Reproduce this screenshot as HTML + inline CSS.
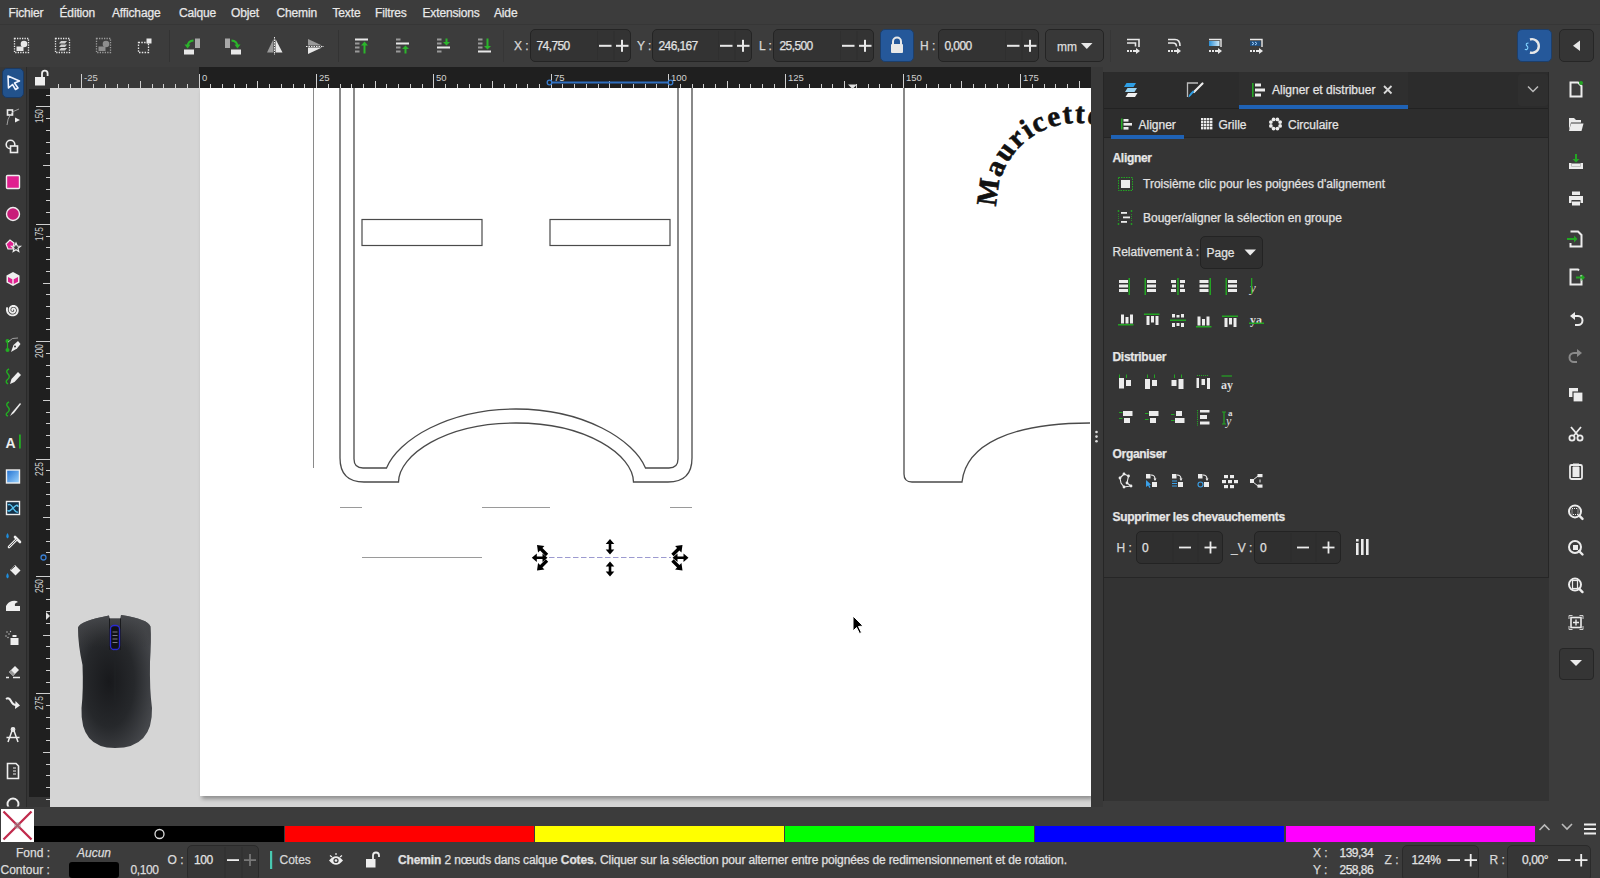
<!DOCTYPE html>
<html><head><meta charset="utf-8">
<style>
*{box-sizing:border-box}
body{margin:0;width:1600px;height:878px;background:#3c3c3c;position:relative;overflow:hidden;font-family:"Liberation Sans",sans-serif;color:#e6e6e6}
.a{position:absolute}
.t{position:absolute;font-size:12px;line-height:14px;white-space:nowrap;color:#e2e2e2;-webkit-text-stroke:0.25px currentColor}
.m{position:absolute;top:6px;font-size:12px;line-height:14px;white-space:nowrap;color:#e8e8e8;letter-spacing:-0.15px;-webkit-text-stroke:0.25px currentColor}
.en{position:absolute;background:#333;border:1px solid #242424;border-radius:5px}
svg{position:absolute;left:0;top:0}
</style></head><body>

<div class="a" style="left:0px;top:24px;width:1600px;height:1px;background:#363636;"></div>
<div class="a" style="left:0px;top:67px;width:27px;height:743px;background:#383838;"></div>
<div class="a" style="left:26px;top:67px;width:1px;height:743px;background:#2a2a2a;"></div>
<div class="a" style="left:27px;top:67px;width:23px;height:22px;background:#353535;"></div>
<div class="a" style="left:50px;top:67px;width:149px;height:21px;background:#393939;"></div>
<div class="a" style="left:199px;top:67px;width:892px;height:21px;background:#1f1f1f;"></div>
<div class="a" style="left:27px;top:89px;width:2px;height:720px;background:#353535;"></div>
<div class="a" style="left:29px;top:89px;width:21px;height:708px;background:#1f1f1f;"></div>
<div class="a" style="left:29px;top:797px;width:21px;height:12px;background:#353535;"></div>
<div class="a" style="left:50px;top:88px;width:1041px;height:719px;background:#d5d5d5;"></div>
<div class="a" style="left:200px;top:88px;width:891px;height:708px;background:#ffffff;box-shadow:2px 3px 4px rgba(0,0,0,0.33)"></div>
<div class="a" style="left:1091px;top:67px;width:12px;height:743px;background:#383838;"></div>
<div class="a" style="left:1103px;top:72px;width:446px;height:729px;background:#333333;"></div>
<div class="a" style="left:1103px;top:72px;width:1px;height:729px;background:#262626;"></div>
<div class="a" style="left:1104px;top:72px;width:445px;height:37px;background:#2c2c2c;"></div>
<div class="a" style="left:1239px;top:72px;width:169px;height:37px;background:#2f2f2f;"></div>
<div class="a" style="left:1104px;top:108px;width:445px;height:1px;background:#222;"></div>
<div class="a" style="left:1239px;top:105px;width:169px;height:4px;background:#1f62b5;"></div>
<div class="a" style="left:1104px;top:109px;width:445px;height:28px;background:#2d2d2d;"></div>
<div class="a" style="left:1104px;top:137px;width:445px;height:1px;background:#252525;"></div>
<div class="a" style="left:1104px;top:138px;width:444px;height:439px;background:#353535;"></div>
<div class="a" style="left:1111px;top:135px;width:73px;height:4px;background:#1f62b5;"></div>
<div class="a" style="left:1104px;top:577px;width:445px;height:1px;background:#262626;"></div>
<div class="a" style="left:1548px;top:72px;width:1px;height:506px;background:#262626;"></div>
<div class="a" style="left:1549px;top:67px;width:51px;height:743px;background:#3c3c3c;"></div>
<div class="a" style="left:0px;top:807px;width:1600px;height:35px;background:#3c3c3c;"></div>
<div class="a" style="left:34.0px;top:826px;width:249.6px;height:16px;background:#000000;"></div>
<div class="a" style="left:284.8px;top:826px;width:249.0px;height:16px;background:#ff0000;"></div>
<div class="a" style="left:535.0px;top:826px;width:249.0px;height:16px;background:#ffff00;"></div>
<div class="a" style="left:785.2px;top:826px;width:249.0px;height:16px;background:#00ff00;"></div>
<div class="a" style="left:1035.4px;top:826px;width:249.0px;height:16px;background:#0000ff;"></div>
<div class="a" style="left:1285.6px;top:826px;width:249.0px;height:16px;background:#ff00ff;"></div>
<div class="a" style="left:0px;top:842px;width:1600px;height:36px;background:#3c3c3c;"></div>
<div class="m" style="left:8.5px">Fichier</div>
<div class="m" style="left:59.5px">Édition</div>
<div class="m" style="left:112px">Affichage</div>
<div class="m" style="left:179px">Calque</div>
<div class="m" style="left:231px">Objet</div>
<div class="m" style="left:276.5px">Chemin</div>
<div class="m" style="left:332.5px">Texte</div>
<div class="m" style="left:375px">Filtres</div>
<div class="m" style="left:422.5px">Extensions</div>
<div class="m" style="left:494px">Aide</div>
<div class="t" style="left:514px;top:39px;color:#d8d8d8">X :</div>
<div class="en" style="left:530px;top:29px;width:101px;height:33px"></div>
<div class="t" style="left:536.5px;top:39px;letter-spacing:-0.6px">74,750</div>
<div class="t" style="left:637px;top:39px;color:#d8d8d8">Y :</div>
<div class="en" style="left:652px;top:29px;width:100px;height:33px"></div>
<div class="t" style="left:658.5px;top:39px;letter-spacing:-0.6px">246,167</div>
<div class="t" style="left:759px;top:39px;color:#d8d8d8">L :</div>
<div class="en" style="left:773px;top:29px;width:101px;height:33px"></div>
<div class="t" style="left:779.5px;top:39px;letter-spacing:-0.6px">25,500</div>
<div class="t" style="left:920px;top:39px;color:#d8d8d8">H :</div>
<div class="en" style="left:938px;top:29px;width:101px;height:33px"></div>
<div class="t" style="left:944.5px;top:39px;letter-spacing:-0.6px">0,000</div>
<div class="a" style="left:880px;top:29px;width:34px;height:33px;background:#25589a;border:1px solid #1d3f6b;border-radius:5px"></div>
<div class="en" style="left:1045px;top:29px;width:59px;height:33px;background:#383838"></div>
<div class="t" style="left:1057px;top:40px;color:#ddd">mm</div>
<div class="a" style="left:1517px;top:29px;width:35px;height:33px;background:#25589a;border:1px solid #1d3f6b;border-radius:5px"></div>
<div class="a" style="left:1559px;top:29px;width:35px;height:33px;background:#353535;border:1px solid #262626;border-radius:5px"></div>
<div class="t" style="left:1272px;top:83px;color:#e4e4e4">Aligner et distribuer</div>
<div class="t" style="left:1138.5px;top:118px;color:#e4e4e4">Aligner</div>
<div class="t" style="left:1218.5px;top:118px;color:#e4e4e4">Grille</div>
<div class="t" style="left:1288px;top:118px;color:#e4e4e4">Circulaire</div>
<div class="t" style="left:1112.5px;top:151px;font-weight:bold;color:#e6e6e6;letter-spacing:-0.3px">Aligner</div>
<div class="t" style="left:1143px;top:177px">Troisième clic pour les poignées d'alignement</div>
<div class="t" style="left:1143px;top:211px">Bouger/aligner la sélection en groupe</div>
<div class="t" style="left:1112.5px;top:245px">Relativement à :</div>
<div class="en" style="left:1200px;top:236px;width:63px;height:33px;background:#2f2f2f;border-color:#232323"></div>
<div class="t" style="left:1206.5px;top:246px">Page</div>
<div class="t" style="left:1112.5px;top:350px;font-weight:bold;color:#e6e6e6;letter-spacing:-0.3px">Distribuer</div>
<div class="t" style="left:1112.5px;top:447px;font-weight:bold;color:#e6e6e6;letter-spacing:-0.3px">Organiser</div>
<div class="t" style="left:1112.5px;top:510px;font-weight:bold;color:#e6e6e6;letter-spacing:-0.3px">Supprimer les chevauchements</div>
<div class="t" style="left:1116.5px;top:541px;color:#d8d8d8">H :</div>
<div class="en" style="left:1136px;top:531px;width:87px;height:33px;background:#2f2f2f;border-color:#232323"></div>
<div class="t" style="left:1142px;top:541px">0</div>
<div class="t" style="left:1231px;top:541px;color:#d8d8d8">_V :</div>
<div class="en" style="left:1254px;top:531px;width:87px;height:33px;background:#2f2f2f;border-color:#232323"></div>
<div class="t" style="left:1260px;top:541px">0</div>
<div class="a" style="left:1559px;top:648px;width:35px;height:32px;background:#353535;border:1px solid #262626;border-radius:4px"></div>
<div class="a" style="left:2px;top:68px;width:22px;height:30px;background:#22528c;border:1px solid #1a3a64;border-radius:5px"></div>
<div class="t" style="left:16px;top:845.5px;color:#dcdcdc">Fond :</div>
<div class="t" style="left:77px;top:845.5px;font-style:italic;color:#dcdcdc">Aucun</div>
<div class="t" style="left:0.5px;top:862.5px;color:#dcdcdc">Contour :</div>
<div class="a" style="left:69px;top:862px;width:50px;height:16px;background:#000;border-radius:3px"></div>
<div class="t" style="left:130.5px;top:862.5px;color:#dcdcdc;letter-spacing:-0.4px">0,100</div>
<div class="t" style="left:167.5px;top:853px;color:#dcdcdc">O :</div>
<div class="en" style="left:187px;top:845px;width:72px;height:36px;background:#363636;border-color:#2a2a2a"></div>
<div class="t" style="left:194px;top:853px;letter-spacing:-0.4px">100</div>
<div class="t" style="left:279.5px;top:853px;color:#d8d8d8">Cotes</div>
<div class="t" style="left:398px;top:853px;color:#e0e0e0;letter-spacing:-0.12px"><b>Chemin</b> 2 nœuds dans calque <b>Cotes</b>. Cliquer sur la sélection pour alterner entre poignées de redimensionnement et de rotation.</div>
<div class="t" style="left:1313px;top:845.5px;color:#d8d8d8">X :</div>
<div class="t" style="left:1339.5px;top:845.5px;letter-spacing:-0.5px">139,34</div>
<div class="t" style="left:1313px;top:862.5px;color:#d8d8d8">Y :</div>
<div class="t" style="left:1339.5px;top:862.5px;letter-spacing:-0.5px">258,86</div>
<div class="t" style="left:1384.5px;top:853px;color:#d8d8d8">Z :</div>
<div class="en" style="left:1402px;top:845px;width:77px;height:36px;background:#363636;border-color:#2a2a2a"></div>
<div class="t" style="left:1411.5px;top:853px;letter-spacing:-0.4px">124%</div>
<div class="t" style="left:1489.5px;top:853px;color:#d8d8d8">R :</div>
<div class="en" style="left:1507px;top:845px;width:84px;height:36px;background:#363636;border-color:#2a2a2a"></div>
<div class="t" style="left:1522px;top:853px;letter-spacing:-0.4px">0,00°</div>
<svg width="1600" height="878" viewBox="0 0 1600 878"><rect x="14.5" y="38.5" width="14" height="14" fill="none" stroke="#e8e8e8" stroke-width="1.3" stroke-dasharray="1.3 1.2"/><circle cx="24" cy="44" r="3.3" fill="#e8e8e8"/><rect x="16.5" y="46.5" width="7" height="4.5" fill="#e8e8e8"/><rect x="55.5" y="38.5" width="14" height="14" fill="none" stroke="#e8e8e8" stroke-width="1.3" stroke-dasharray="1.3 1.2"/><path d="M59 43.5 L61 41 L67 41 L65 43.5 Z" fill="#cfcfcf"/><path d="M59 47.0 L61 44.5 L67 44.5 L65 47.0 Z" fill="#cfcfcf"/><path d="M59 50.5 L61 48 L67 48 L65 50.5 Z" fill="#cfcfcf"/><rect x="96.5" y="38.5" width="14" height="14" fill="none" stroke="#9c9c9c" stroke-width="1.3" stroke-dasharray="1.3 1.2"/><circle cx="106" cy="44" r="3.3" fill="#8d8d8d"/><rect x="98.5" y="46.5" width="7" height="4.5" fill="#8d8d8d"/><rect x="138.5" y="42.5" width="10" height="10" fill="none" stroke="#e8e8e8" stroke-width="1.3" stroke-dasharray="1.5 1.3"/><rect x="146.5" y="38.5" width="5" height="5" fill="#e8e8e8"/><rect x="169" y="30" width="1" height="32" fill="#333"/><rect x="184" y="49.5" width="10" height="5" fill="#e8e8e8"/><rect x="195" y="38.5" width="5" height="9.5" fill="#a8a8a8"/><path d="M193.5 40.5 Q188 41 187.5 46" fill="none" stroke="#2bb52b" stroke-width="1.8"/><path d="M184.5 44.5 L187.6 48.5 L190.5 44.5 Z" fill="#2bb52b"/><rect x="225" y="38.5" width="5" height="9.5" fill="#a8a8a8"/><rect x="231" y="49.5" width="10" height="5" fill="#e8e8e8"/><path d="M231.5 40.5 Q237 41 237.5 46" fill="none" stroke="#2bb52b" stroke-width="1.8"/><path d="M234.5 44.5 L237.4 48.5 L240.5 44.5 Z" fill="#2bb52b"/><path d="M273.5 39 L267 52.5 L273.5 52.5 Z" fill="#9a9a9a"/><path d="M275.5 39 L282.5 52.5 L275.5 52.5 Z" fill="#e8e8e8"/><line x1="274.5" y1="37" x2="274.5" y2="55" stroke="#e8e8e8" stroke-width="1" stroke-dasharray="1.5 1"/><path d="M308 39 L322 45.5 L308 45.5 Z" fill="#9a9a9a"/><path d="M308 47.5 L322 47.5 L308 54 Z" fill="#e8e8e8"/><line x1="306" y1="46.5" x2="324" y2="46.5" stroke="#e8e8e8" stroke-width="1" stroke-dasharray="1.5 1"/><rect x="338" y="30" width="1" height="32" fill="#333"/><rect x="355" y="38.5" width="13" height="2" fill="#e8e8e8"/><rect x="355" y="42.5" width="4.5" height="2" fill="#9a9a9a"/><rect x="355" y="46.5" width="4.5" height="2" fill="#9a9a9a"/><rect x="355" y="50.5" width="4.5" height="2" fill="#9a9a9a"/><path d="M364.5 53.5 V44" stroke="#2bb52b" stroke-width="2"/><path d="M361 45.5 L364.5 41.5 L368 45.5Z" fill="#2bb52b"/><rect x="396" y="38.5" width="4.5" height="2" fill="#9a9a9a"/><rect x="396" y="42.5" width="13" height="2" fill="#e8e8e8"/><rect x="396" y="46.5" width="4.5" height="2" fill="#9a9a9a"/><rect x="396" y="50.5" width="4.5" height="2" fill="#9a9a9a"/><path d="M405.5 53.5 V48" stroke="#2bb52b" stroke-width="2"/><path d="M402 49 L405.5 45.5 L409 49Z" fill="#2bb52b"/><rect x="437" y="38.5" width="4.5" height="2" fill="#9a9a9a"/><rect x="437" y="42.5" width="4.5" height="2" fill="#9a9a9a"/><rect x="437" y="46.5" width="13" height="2" fill="#e8e8e8"/><rect x="437" y="50.5" width="4.5" height="2" fill="#9a9a9a"/><path d="M446.5 38.5 V43" stroke="#2bb52b" stroke-width="2"/><path d="M443 42 L446.5 45.5 L450 42Z" fill="#2bb52b"/><rect x="478" y="38.5" width="4.5" height="2" fill="#9a9a9a"/><rect x="478" y="42.5" width="4.5" height="2" fill="#9a9a9a"/><rect x="478" y="46.5" width="4.5" height="2" fill="#9a9a9a"/><rect x="478" y="50.5" width="13" height="2" fill="#e8e8e8"/><path d="M487.5 38.5 V47" stroke="#2bb52b" stroke-width="2"/><path d="M484 46 L487.5 49.5 L491 46Z" fill="#2bb52b"/><rect x="503" y="30" width="1" height="32" fill="#363636"/><rect x="597" y="31" width="1" height="29" fill="#2f2f2f"/><rect x="613.5" y="31" width="1" height="29" fill="#2f2f2f"/><rect x="599" y="44.8" width="12.5" height="2" fill="#e8e8e8"/><rect x="616" y="44.8" width="12.5" height="2" fill="#e8e8e8"/><rect x="621" y="39.8" width="2" height="12" fill="#e8e8e8"/><rect x="718" y="31" width="1" height="29" fill="#2f2f2f"/><rect x="734.5" y="31" width="1" height="29" fill="#2f2f2f"/><rect x="720" y="44.8" width="12.5" height="2" fill="#e8e8e8"/><rect x="737" y="44.8" width="12.5" height="2" fill="#e8e8e8"/><rect x="742" y="39.8" width="2" height="12" fill="#e8e8e8"/><rect x="840" y="31" width="1" height="29" fill="#2f2f2f"/><rect x="856.5" y="31" width="1" height="29" fill="#2f2f2f"/><rect x="842" y="44.8" width="12.5" height="2" fill="#e8e8e8"/><rect x="859" y="44.8" width="12.5" height="2" fill="#e8e8e8"/><rect x="864" y="39.8" width="2" height="12" fill="#e8e8e8"/><rect x="1005" y="31" width="1" height="29" fill="#2f2f2f"/><rect x="1021.5" y="31" width="1" height="29" fill="#2f2f2f"/><rect x="1007" y="44.8" width="12.5" height="2" fill="#e8e8e8"/><rect x="1024" y="44.8" width="12.5" height="2" fill="#e8e8e8"/><rect x="1029" y="39.8" width="2" height="12" fill="#e8e8e8"/><path d="M893 44 V41.5 A4 4 0 0 1 901 41.5 V44" fill="none" stroke="#e8e8e8" stroke-width="2"/><rect x="891" y="44" width="12" height="9" rx="1" fill="#e8e8e8"/><path d="M1081 43 L1092.5 43 L1086.8 49 Z" fill="#e8e8e8"/><rect x="1110" y="30" width="1" height="32" fill="#363636"/><path d="M1127 39.5 H1139 V47" fill="none" stroke="#e8e8e8" stroke-width="1.6"/><path d="M1127 43 H1135.5 V46.5" fill="none" stroke="#e8e8e8" stroke-width="1.6"/><rect x="1127" y="50" width="2" height="2" fill="#e8e8e8"/><rect x="1130" y="50" width="2" height="2" fill="#e8e8e8"/><rect x="1133" y="50" width="3" height="2" fill="#e8e8e8"/><path d="M1136 48 L1140 51 L1136 54 Z" fill="#e8e8e8"/><path d="M1168 39.5 H1175 Q1180 39.5 1180 46" fill="none" stroke="#e8e8e8" stroke-width="1.6"/><path d="M1168 43 H1173 Q1176.5 43 1176.5 46.5" fill="none" stroke="#e8e8e8" stroke-width="1.6"/><rect x="1168" y="50" width="2" height="2" fill="#e8e8e8"/><rect x="1171" y="50" width="2" height="2" fill="#e8e8e8"/><rect x="1174" y="50" width="3" height="2" fill="#e8e8e8"/><path d="M1177 48 L1181 51 L1177 54 Z" fill="#e8e8e8"/><defs><linearGradient id="gb" x1="0" x2="1"><stop offset="0" stop-color="#2b8fd6"/><stop offset="1" stop-color="#cfe8f7"/></linearGradient></defs><path d="M1209 39.5 H1221 V47" fill="none" stroke="#e8e8e8" stroke-width="1.4"/><rect x="1209" y="41" width="10.5" height="5" fill="url(#gb)"/><rect x="1209" y="50" width="2" height="2" fill="#e8e8e8"/><rect x="1212" y="50" width="2" height="2" fill="#e8e8e8"/><rect x="1215" y="50" width="3" height="2" fill="#e8e8e8"/><path d="M1218 48 L1222 51 L1218 54 Z" fill="#e8e8e8"/><path d="M1250 39.5 H1262 V47" fill="none" stroke="#e8e8e8" stroke-width="1.4"/><rect x="1250" y="41" width="10.5" height="5" fill="#1f4f80"/><path d="M1252 42 L1254 43.5 L1252 45 M1255 42 L1257 43.5 L1255 45" stroke="#9fd0ff" stroke-width="1" fill="none"/><rect x="1250" y="50" width="2" height="2" fill="#e8e8e8"/><rect x="1253" y="50" width="2" height="2" fill="#e8e8e8"/><rect x="1256" y="50" width="3" height="2" fill="#e8e8e8"/><path d="M1259 48 L1263 51 L1259 54 Z" fill="#e8e8e8"/><path d="M1530 39.5 A6.8 6.8 0 1 1 1530 52.5" fill="none" stroke="#e8e8e8" stroke-width="2.4"/><path d="M1528.5 43 Q1525.5 43 1526.5 45.5 Q1529 47 1527 49.5 Q1525.5 50 1525 49" fill="none" stroke="#7fd0ff" stroke-width="1.1"/><path d="M1580 40.5 V51 L1573 45.8 Z" fill="#e8e8e8"/><path d="M58.5 84V88M70.5 84V88M81.5 74V88M93.5 84V88M105.5 84V88M117.5 84V88M128.5 84V88M140.5 81V88M152.5 84V88M163.5 84V88M175.5 84V88M187.5 84V88M199.5 74V88M210.5 84V88M222.5 84V88M234.5 84V88M246.5 84V88M257.5 81V88M269.5 84V88M281.5 84V88M293.5 84V88M304.5 84V88M316.5 74V88M328.5 84V88M340.5 84V88M351.5 84V88M363.5 84V88M375.5 81V88M386.5 84V88M398.5 84V88M410.5 84V88M422.5 84V88M433.5 74V88M445.5 84V88M457.5 84V88M469.5 84V88M480.5 84V88M492.5 81V88M504.5 84V88M516.5 84V88M527.5 84V88M539.5 84V88M551.5 74V88M562.5 84V88M574.5 84V88M586.5 84V88M598.5 84V88M609.5 81V88M621.5 84V88M633.5 84V88M645.5 84V88M656.5 84V88M668.5 74V88M680.5 84V88M692.5 84V88M703.5 84V88M715.5 84V88M727.5 81V88M739.5 84V88M750.5 84V88M762.5 84V88M774.5 84V88M785.5 74V88M797.5 84V88M809.5 84V88M821.5 84V88M832.5 84V88M844.5 81V88M856.5 84V88M868.5 84V88M879.5 84V88M891.5 84V88M903.5 74V88M915.5 84V88M926.5 84V88M938.5 84V88M950.5 84V88M961.5 81V88M973.5 84V88M985.5 84V88M997.5 84V88M1008.5 84V88M1020.5 74V88M1032.5 84V88M1044.5 84V88M1055.5 84V88M1067.5 84V88M1079.5 81V88" stroke="#cfcfcf" stroke-width="1"/><text x="84.0" y="80.5" font-family="Liberation Sans" font-size="9.5" fill="#d0d0d0">-25</text><text x="202.0" y="80.5" font-family="Liberation Sans" font-size="9.5" fill="#d0d0d0">0</text><text x="319.0" y="80.5" font-family="Liberation Sans" font-size="9.5" fill="#d0d0d0">25</text><text x="436.0" y="80.5" font-family="Liberation Sans" font-size="9.5" fill="#d0d0d0">50</text><text x="554.0" y="80.5" font-family="Liberation Sans" font-size="9.5" fill="#d0d0d0">75</text><text x="671.0" y="80.5" font-family="Liberation Sans" font-size="9.5" fill="#d0d0d0">100</text><text x="788.0" y="80.5" font-family="Liberation Sans" font-size="9.5" fill="#d0d0d0">125</text><text x="906.0" y="80.5" font-family="Liberation Sans" font-size="9.5" fill="#d0d0d0">150</text><text x="1023.0" y="80.5" font-family="Liberation Sans" font-size="9.5" fill="#d0d0d0">175</text><path d="M550 82.5 H671" stroke="#2f6fc0" stroke-width="2"/><circle cx="549.5" cy="82.5" r="2.3" fill="#1f1f1f" stroke="#3a7ed0" stroke-width="1.3"/><circle cx="670.5" cy="82.5" r="2.3" fill="#1f1f1f" stroke="#3a7ed0" stroke-width="1.3"/><path d="M848 84.5 L857 84.5 L852.5 89 Z" fill="#e0e0e0"/><rect x="35" y="77" width="10" height="8.5" fill="#eee"/><path d="M42 77 V73.5 A2.8 2.8 0 0 1 47.6 73.5 V76" fill="none" stroke="#eee" stroke-width="1.8"/><path d="M46 95.5H50M36 106.5H50M46 118.5H50M46 130.5H50M46 142.5H50M46 153.5H50M43 165.5H50M46 177.5H50M46 189.5H50M46 200.5H50M46 212.5H50M36 224.5H50M46 236.5H50M46 247.5H50M46 259.5H50M46 271.5H50M43 283.5H50M46 294.5H50M46 306.5H50M46 318.5H50M46 329.5H50M36 341.5H50M46 353.5H50M46 365.5H50M46 376.5H50M46 388.5H50M43 400.5H50M46 412.5H50M46 423.5H50M46 435.5H50M46 447.5H50M36 459.5H50M46 470.5H50M46 482.5H50M46 494.5H50M46 505.5H50M43 517.5H50M46 529.5H50M46 541.5H50M46 552.5H50M46 564.5H50M36 576.5H50M46 588.5H50M46 599.5H50M46 611.5H50M46 623.5H50M43 635.5H50M46 646.5H50M46 658.5H50M46 670.5H50M46 682.5H50M36 693.5H50M46 705.5H50M46 717.5H50M46 728.5H50M46 740.5H50M43 752.5H50M46 764.5H50M46 775.5H50M46 787.5H50M46 799.5H50" stroke="#cfcfcf" stroke-width="1"/><text transform="translate(43,109.0) rotate(-90) scale(0.84,1)" text-anchor="end" font-family="Liberation Sans" font-size="10" fill="#d0d0d0">150</text><text transform="translate(43,227.0) rotate(-90) scale(0.84,1)" text-anchor="end" font-family="Liberation Sans" font-size="10" fill="#d0d0d0">175</text><text transform="translate(43,344.0) rotate(-90) scale(0.84,1)" text-anchor="end" font-family="Liberation Sans" font-size="10" fill="#d0d0d0">200</text><text transform="translate(43,462.0) rotate(-90) scale(0.84,1)" text-anchor="end" font-family="Liberation Sans" font-size="10" fill="#d0d0d0">225</text><text transform="translate(43,579.0) rotate(-90) scale(0.84,1)" text-anchor="end" font-family="Liberation Sans" font-size="10" fill="#d0d0d0">250</text><text transform="translate(43,696.0) rotate(-90) scale(0.84,1)" text-anchor="end" font-family="Liberation Sans" font-size="10" fill="#d0d0d0">275</text><circle cx="43.5" cy="557.5" r="2.5" fill="#1f1f1f" stroke="#3a7ed0" stroke-width="1.3"/><path d="M46 612 L50 616 L46 620 Z" fill="#e0e0e0"/><defs><clipPath id="cvclip"><rect x="50" y="88" width="1041" height="719"/></clipPath></defs><g clip-path="url(#cvclip)"><path d="M313.5 88 V468" stroke="#8a8a8a" stroke-width="1"/><path d="M340 88 V458 Q340 482 364 482 H398.5 C399 455 445 423 516 423 C587 423 633 455 633.5 482 H668 Q692 482 692 458 V88" fill="none" stroke="#4a4a4a" stroke-width="1.3"/><path d="M354 88 V459 Q354 468 363 468 H386.5 C398 440 448 409 516 409 C584 409 634 440 645.5 468 H669 Q678 468 678 459 V88" fill="none" stroke="#4a4a4a" stroke-width="1.3"/><rect x="362" y="219.5" width="120" height="26" fill="none" stroke="#4a4a4a" stroke-width="1.2"/><rect x="550" y="219.5" width="120" height="26" fill="none" stroke="#4a4a4a" stroke-width="1.2"/><path d="M340 507.5 H362 M482 507.5 H550 M670 507.5 H692 M362 557.5 H482" stroke="#9a9a9a" stroke-width="1"/><path d="M549 557.5 H671" stroke="#9c9ad0" stroke-width="1" stroke-dasharray="5.5 2.5"/><path d="M531.80 557.80 L536.80 562.10 L536.80 559.10 L542.50 559.10 L542.50 562.10 L547.50 557.80 L542.50 553.50 L542.50 556.50 L536.80 556.50 L536.80 553.50 Z" fill="#000"/><path d="M537.00 545.00 L538.06 552.42 L540.04 550.44 L545.80 556.20 L548.20 553.80 L542.44 548.04 L544.42 546.06 Z" fill="#000"/><path d="M537.00 570.50 L544.42 569.44 L542.44 567.46 L548.20 561.70 L545.80 559.30 L540.04 565.06 L538.06 563.08 Z" fill="#000"/><path d="M688.50 557.80 L683.50 553.50 L683.50 556.50 L677.50 556.50 L677.50 553.50 L672.50 557.80 L677.50 562.10 L677.50 559.10 L683.50 559.10 L683.50 562.10 Z" fill="#000"/><path d="M682.50 545.00 L675.08 546.06 L677.06 548.04 L671.30 553.80 L673.70 556.20 L679.46 550.44 L681.44 552.42 Z" fill="#000"/><path d="M682.50 570.50 L681.44 563.08 L679.46 565.06 L673.70 559.30 L671.30 561.70 L677.06 567.46 L675.08 569.44 Z" fill="#000"/><path d="M610.00 539.00 L605.70 544.00 L608.70 544.00 L608.70 549.50 L605.70 549.50 L610.00 554.50 L614.30 549.50 L611.30 549.50 L611.30 544.00 L614.30 544.00 Z" fill="#000"/><path d="M610.00 561.50 L605.70 566.50 L608.70 566.50 L608.70 571.50 L605.70 571.50 L610.00 576.50 L614.30 571.50 L611.30 571.50 L611.30 566.50 L614.30 566.50 Z" fill="#000"/><path d="M904 88 V474 Q904 482 912 482 H962 C966 445 1010 423 1090 423" fill="none" stroke="#4a4a4a" stroke-width="1.3"/><defs><path id="arc" d="M 997.1 206.8 A 80 80 0 0 1 1117.0 133.7"/></defs><text font-family="Liberation Serif" font-weight="bold" font-size="29" fill="#111" stroke="#111" stroke-width="0.6"><textPath href="#arc" letter-spacing="1.6">Mauricette</textPath></text><path d="M853 616 L853 631 L856.5 627.5 L859.5 633.5 L861.5 632.5 L858.5 626.5 L863 626 Z" fill="#000" stroke="#fff" stroke-width="1"/><defs><radialGradient id="mg" cx="0.42" cy="0.5" r="0.62"><stop offset="0" stop-color="#18191c"/><stop offset="0.55" stop-color="#26282b"/><stop offset="1" stop-color="#45474b"/></radialGradient><linearGradient id="mg2" x1="0" y1="0" x2="0" y2="1"><stop offset="0" stop-color="#4a4c50" stop-opacity="0.8"/><stop offset="0.25" stop-color="#333" stop-opacity="0"/></linearGradient></defs><path d="M78 627.5 Q80 621 109 615.5 L109.5 618.5 L120.5 618.5 L121 615 Q148 619 150.5 626.5 Q151.5 640 150 662 Q149.5 690 152 708 Q153 748 115 748 Q80 748 81.5 708 Q83.5 690 82.5 665 Q78 645 78 627.5 Z" fill="url(#mg)"/><path d="M78 627.5 Q80 621 109 615.5 L109.5 618.5 L120.5 618.5 L121 615 Q148 619 150.5 626.5 Q151.5 640 150 662 Q149.5 690 152 708 Q153 748 115 748 Q80 748 81.5 708 Q83.5 690 82.5 665 Q78 645 78 627.5 Z" fill="url(#mg2)"/><path d="M109.5 618.5 L109.5 650 M120.5 618.5 L120.5 650" stroke="#1a1b1e" stroke-width="1"/><rect x="110.5" y="625.5" width="9" height="24" rx="3.5" fill="#101114" stroke="#2a2ad0" stroke-width="1.3"/><path d="M112.5 632 H117.5 M112.5 635.5 H117.5 M112.5 639 H117.5 M112.5 642.5 H117.5" stroke="#7a7a86" stroke-width="1"/><path d="M115 650 V700" stroke="#222326" stroke-width="0.8"/></g><path d="M1126.5 83 H1136 L1133.5 87 H1124 Z" fill="#2e9fe6"/><path d="M1127.5 88 H1137 L1134.5 92 H1125 Z" fill="#9ad3f2"/><path d="M1128.0 93 H1137.5 L1135.0 97 H1125.5 Z" fill="#f0f0f0"/><path d="M1187.5 97 V83 H1198" fill="none" stroke="#bdbdbd" stroke-width="1.3"/><path d="M1202.5 83.5 L1194 92" stroke="#ececec" stroke-width="2.2" stroke-linecap="round"/><path d="M1194.5 91.5 L1191 95.5 Q1189 97.5 1188.5 97.5 Q1188.5 95 1190.5 93 L1193 90.5 Z" fill="#2e9fe6"/><rect x="1252" y="83" width="1.6" height="14" fill="#23a523"/><rect x="1255" y="83.5" width="6" height="3" fill="#ececec"/><rect x="1255" y="88.5" width="10" height="3" fill="#ececec"/><rect x="1255" y="93.5" width="6" height="3" fill="#ececec"/><path d="M1384 86 L1391.5 93.5 M1391.5 86 L1384 93.5" stroke="#d8d8d8" stroke-width="1.8"/><rect x="1518" y="74" width="30" height="32" rx="3" fill="#2f2f2f"/><path d="M1528 86.5 L1533 91.5 L1538 86.5" fill="none" stroke="#bbb" stroke-width="1.5"/><rect x="1121" y="118.5" width="1.6" height="11" fill="#23a523"/><rect x="1123.5" y="119" width="5" height="2.6" fill="#ececec"/><rect x="1123.5" y="123" width="8.5" height="2.6" fill="#ececec"/><rect x="1123.5" y="127" width="5" height="2.6" fill="#ececec"/><rect x="1201" y="118" width="2.4" height="2.4" fill="#ececec"/><rect x="1201" y="121" width="2.4" height="2.4" fill="#ececec"/><rect x="1201" y="124" width="2.4" height="2.4" fill="#ececec"/><rect x="1201" y="127" width="2.4" height="2.4" fill="#ececec"/><rect x="1204" y="118" width="2.4" height="2.4" fill="#ececec"/><rect x="1204" y="121" width="2.4" height="2.4" fill="#ececec"/><rect x="1204" y="124" width="2.4" height="2.4" fill="#ececec"/><rect x="1204" y="127" width="2.4" height="2.4" fill="#ececec"/><rect x="1207" y="118" width="2.4" height="2.4" fill="#ececec"/><rect x="1207" y="121" width="2.4" height="2.4" fill="#ececec"/><rect x="1207" y="124" width="2.4" height="2.4" fill="#ececec"/><rect x="1207" y="127" width="2.4" height="2.4" fill="#ececec"/><rect x="1210" y="118" width="2.4" height="2.4" fill="#ececec"/><rect x="1210" y="121" width="2.4" height="2.4" fill="#ececec"/><rect x="1210" y="124" width="2.4" height="2.4" fill="#ececec"/><rect x="1210" y="127" width="2.4" height="2.4" fill="#ececec"/><circle cx="1280.12" cy="125.91" r="1.9" fill="#ececec"/><circle cx="1277.41" cy="128.62" r="1.9" fill="#ececec"/><circle cx="1273.59" cy="128.62" r="1.9" fill="#ececec"/><circle cx="1270.88" cy="125.91" r="1.9" fill="#ececec"/><circle cx="1270.88" cy="122.09" r="1.9" fill="#ececec"/><circle cx="1273.59" cy="119.38" r="1.9" fill="#ececec"/><circle cx="1277.41" cy="119.38" r="1.9" fill="#ececec"/><circle cx="1280.12" cy="122.09" r="1.9" fill="#ececec"/><rect x="1118.5" y="177.5" width="14" height="13" fill="none" stroke="#23a523" stroke-width="1" stroke-dasharray="1.5 1"/><rect x="1121" y="180" width="9" height="8" fill="#ececec"/><rect x="1121" y="212" width="6" height="1.8" fill="#ececec"/><rect x="1123" y="216.5" width="7" height="1.8" fill="#ececec"/><rect x="1121" y="221" width="6" height="1.8" fill="#ececec"/><circle cx="1118.5" cy="211" r="0.9" fill="#23a523"/><circle cx="1131.5" cy="211" r="0.9" fill="#23a523"/><circle cx="1118.5" cy="224" r="0.9" fill="#23a523"/><circle cx="1131.5" cy="224" r="0.9" fill="#23a523"/><path d="M1118.5 214 V221 M1131.5 214 V221" stroke="#23a523" stroke-width="0.8" stroke-dasharray="1 1"/><path d="M1244.5 249.5 L1256 249.5 L1250.2 255.5 Z" fill="#ececec"/><rect x="1119" y="280.0" width="9" height="3" fill="#ececec"/><rect x="1119" y="284.5" width="9" height="3" fill="#ececec"/><rect x="1119" y="289.0" width="9" height="3" fill="#ececec"/><rect x="1128.5" y="278" width="1.5" height="17" fill="#23a523"/><rect x="1144.5" y="278" width="1.5" height="17" fill="#23a523"/><rect x="1147" y="280.0" width="9" height="3" fill="#ececec"/><rect x="1147" y="284.5" width="9" height="3" fill="#ececec"/><rect x="1147" y="289.0" width="9" height="3" fill="#ececec"/><rect x="1171" y="280" width="5" height="3" fill="#ececec"/><rect x="1180" y="280" width="5" height="3" fill="#ececec"/><rect x="1172" y="284.5" width="4" height="3" fill="#ececec"/><rect x="1180" y="284.5" width="4" height="3" fill="#ececec"/><rect x="1171" y="289" width="5" height="3" fill="#ececec"/><rect x="1180" y="289" width="5" height="3" fill="#ececec"/><rect x="1177.2" y="278" width="1.5" height="17" fill="#23a523"/><rect x="1199.5" y="280.0" width="9" height="3" fill="#ececec"/><rect x="1199.5" y="284.5" width="9" height="3" fill="#ececec"/><rect x="1199.5" y="289.0" width="9" height="3" fill="#ececec"/><rect x="1209.5" y="278" width="1.5" height="17" fill="#23a523"/><rect x="1225.5" y="278" width="1.5" height="17" fill="#23a523"/><rect x="1228" y="280.0" width="9" height="3" fill="#ececec"/><rect x="1228" y="284.5" width="9" height="3" fill="#ececec"/><rect x="1228" y="289.0" width="9" height="3" fill="#ececec"/><text x="1250" y="292" font-family="Liberation Serif" font-size="13" fill="#ddd" font-style="italic">y</text><rect x="1251" y="278" width="1.3" height="16" fill="#23a523"/><rect x="1121" y="314.5" width="3" height="9" fill="#ececec"/><rect x="1125.5" y="317" width="3" height="6.5" fill="#ececec"/><rect x="1130" y="314.5" width="3" height="9" fill="#ececec"/><rect x="1118" y="324" width="15.5" height="1.5" fill="#23a523"/><rect x="1144" y="313.5" width="15.5" height="1.5" fill="#23a523"/><rect x="1146.5" y="316" width="3" height="9" fill="#ececec"/><rect x="1151" y="316" width="3" height="6.5" fill="#ececec"/><rect x="1155.5" y="316" width="3" height="9" fill="#ececec"/><rect x="1172" y="314" width="3" height="3.5" fill="#ececec"/><rect x="1176.5" y="315" width="3" height="2.5" fill="#ececec"/><rect x="1181" y="314" width="3" height="3.5" fill="#ececec"/><rect x="1170" y="319.5" width="16" height="1.5" fill="#23a523"/><rect x="1172" y="323" width="3" height="4" fill="#ececec"/><rect x="1176.5" y="323" width="3" height="3" fill="#ececec"/><rect x="1181" y="323" width="3" height="4" fill="#ececec"/><rect x="1197.5" y="316.5" width="3" height="9" fill="#ececec"/><rect x="1202" y="319" width="3" height="6.5" fill="#ececec"/><rect x="1206.5" y="316.5" width="3" height="9" fill="#ececec"/><rect x="1196" y="326" width="15.5" height="1.5" fill="#23a523"/><rect x="1222" y="315.5" width="16" height="1.5" fill="#23a523"/><rect x="1224.5" y="318" width="3" height="9" fill="#ececec"/><rect x="1229" y="318" width="3" height="6.5" fill="#ececec"/><rect x="1233.5" y="318" width="3" height="9" fill="#ececec"/><text x="1250" y="324" font-family="Liberation Serif" font-size="12" font-weight="bold" fill="#ddd">ya</text><rect x="1249" y="322.5" width="15" height="1.5" fill="#23a523"/><rect x="1119" y="374.5" width="1" height="3.5" fill="#23a523"/><rect x="1126" y="374.5" width="1" height="3.5" fill="#23a523"/><rect x="1119" y="378" width="5" height="10.5" fill="#ececec"/><rect x="1126" y="380" width="5" height="6" fill="#ececec"/><rect x="1147" y="374.5" width="1" height="3.5" fill="#23a523"/><rect x="1154" y="374.5" width="1" height="3.5" fill="#23a523"/><rect x="1145" y="379" width="5" height="10" fill="#ececec"/><rect x="1152" y="380" width="5" height="6" fill="#ececec"/><rect x="1174" y="374.5" width="1" height="3.5" fill="#23a523"/><rect x="1181" y="374.5" width="1" height="3.5" fill="#23a523"/><rect x="1171.5" y="380" width="5" height="6" fill="#ececec"/><rect x="1178.5" y="379" width="5" height="10" fill="#ececec"/><path d="M1197 375.5 H1208" stroke="#23a523" stroke-width="1" stroke-dasharray="1 1"/><rect x="1196.5" y="378" width="2.5" height="10" fill="#ececec"/><rect x="1201.5" y="379" width="3.5" height="6" fill="#ececec"/><rect x="1207" y="378" width="3" height="11" fill="#ececec"/><path d="M1221.5 376 H1232" stroke="#23a523" stroke-width="1.2"/><text x="1221" y="389" font-family="Liberation Serif" font-size="12" font-weight="bold" fill="#ddd">ay</text><rect x="1119" y="412" width="3.5" height="1" fill="#23a523"/><rect x="1119" y="418" width="3.5" height="1" fill="#23a523"/><rect x="1123" y="411" width="9.5" height="5" fill="#ececec"/><rect x="1124" y="418" width="6" height="5" fill="#ececec"/><rect x="1145" y="413" width="3.5" height="1" fill="#23a523"/><rect x="1145" y="419" width="3.5" height="1" fill="#23a523"/><rect x="1149" y="411" width="9.5" height="5" fill="#ececec"/><rect x="1150" y="418" width="6" height="5" fill="#ececec"/><rect x="1171" y="414" width="3.5" height="1" fill="#23a523"/><rect x="1171" y="420" width="3.5" height="1" fill="#23a523"/><rect x="1176" y="411" width="6" height="5" fill="#ececec"/><rect x="1175" y="418" width="9.5" height="5" fill="#ececec"/><path d="M1197.5 410 V426" stroke="#23a523" stroke-width="1" stroke-dasharray="1.2 1"/><rect x="1200" y="410" width="9.5" height="2.5" fill="#ececec"/><rect x="1200" y="415" width="7" height="4" fill="#ececec"/><rect x="1200" y="421.5" width="9.5" height="3" fill="#ececec"/><path d="M1222 412 H1226 M1224 412 V424 M1222 424 H1226" stroke="#23a523" stroke-width="1.2"/><text x="1228" y="416" font-family="Liberation Serif" font-size="9" font-weight="bold" fill="#ddd">a</text><text x="1226" y="425" font-family="Liberation Serif" font-size="12" font-style="italic" fill="#ddd">y</text><path d="M1120 478 L1124 474 L1128.5 476 L1127 483 L1131 486 L1124 487 L1121 483 Z" fill="none" stroke="#ececec" stroke-width="1.1"/><circle cx="1120" cy="478" r="1.4" fill="#ececec"/><circle cx="1124" cy="474" r="1.4" fill="#ececec"/><circle cx="1128.5" cy="476" r="1.4" fill="#ececec"/><circle cx="1127" cy="483" r="1.4" fill="#ececec"/><circle cx="1131" cy="486" r="1.4" fill="#ececec"/><circle cx="1124" cy="487" r="1.4" fill="#ececec"/><rect x="1146" y="474" width="4.5" height="4.5" fill="#ececec"/><rect x="1152" y="482" width="5" height="5" fill="#ececec"/><path d="M1151 475 Q1155 475 1155 479" fill="none" stroke="#ececec" stroke-width="1.1"/><path d="M1153.5 478.5 L1155 481 L1156.5 478.5 Z" fill="#ececec"/><path d="M1146 480 L1146 487 L1148 485.5 L1149.5 488 L1150.5 487.5 L1149.3 485 L1151 484.5 Z" fill="#3aa0e8"/><rect x="1172" y="474" width="4.5" height="4.5" fill="#ececec"/><rect x="1178" y="482" width="5" height="5" fill="#ececec"/><path d="M1177 475 Q1181 475 1181 479" fill="none" stroke="#ececec" stroke-width="1.1"/><path d="M1179.5 478.5 L1181 481 L1182.5 478.5 Z" fill="#ececec"/><path d="M1172 481 H1177 M1172 483.5 H1177 M1172 486 H1177" stroke="#3aa0e8" stroke-width="1.2"/><rect x="1198" y="474" width="4.5" height="4.5" fill="#ececec"/><rect x="1204" y="482" width="5" height="5" fill="#ececec"/><path d="M1203 475 Q1207 475 1207 479" fill="none" stroke="#ececec" stroke-width="1.1"/><path d="M1205.5 478.5 L1207 481 L1208.5 478.5 Z" fill="#ececec"/><circle cx="1200.5" cy="484.5" r="2.5" fill="none" stroke="#3aa0e8" stroke-width="1.1"/><rect x="1224" y="475" width="4" height="3.2" fill="#ececec"/><rect x="1230" y="475" width="4" height="3.2" fill="#ececec"/><rect x="1222" y="480" width="4" height="3.2" fill="#ececec"/><rect x="1228" y="480" width="4" height="3.2" fill="#ececec"/><rect x="1234" y="480" width="4" height="3.2" fill="#ececec"/><rect x="1224" y="485" width="4" height="3.2" fill="#ececec"/><rect x="1230" y="485" width="4" height="3.2" fill="#ececec"/><rect x="1250" y="479" width="4" height="4" fill="#ececec"/><rect x="1257.5" y="474" width="5" height="3.2" fill="#ececec"/><rect x="1257.5" y="484.5" width="5" height="3.2" fill="#ececec"/><path d="M1253 480 L1258 476 M1253 482 L1258 486" stroke="#ececec" stroke-width="1"/><rect x="1259.5" y="479.5" width="1" height="3" fill="#ececec"/><rect x="1172.5" y="533" width="1" height="29" fill="#2c2c2c"/><rect x="1197.5" y="533" width="1" height="29" fill="#2c2c2c"/><rect x="1290.5" y="533" width="1" height="29" fill="#2c2c2c"/><rect x="1315.5" y="533" width="1" height="29" fill="#2c2c2c"/><rect x="1179" y="546.6" width="12" height="1.8" fill="#ececec"/><rect x="1204.5" y="546.6" width="12" height="1.8" fill="#ececec"/><rect x="1209.6" y="541.5" width="1.8" height="12" fill="#ececec"/><rect x="1297" y="546.6" width="12" height="1.8" fill="#ececec"/><rect x="1322.5" y="546.6" width="12" height="1.8" fill="#ececec"/><rect x="1327.6" y="541.5" width="1.8" height="12" fill="#ececec"/><rect x="1356" y="543" width="2.6" height="12" fill="#ececec"/><rect x="1356" y="539" width="2.6" height="2.5" fill="#ececec"/><rect x="1361" y="539" width="2.6" height="16" fill="#ececec"/><rect x="1366" y="539" width="2.6" height="16" fill="#ececec"/><circle cx="1096.5" cy="432.0" r="1.3" fill="#dcdcdc"/><circle cx="1096.5" cy="436.6" r="1.3" fill="#dcdcdc"/><circle cx="1096.5" cy="441.20000000000005" r="1.3" fill="#dcdcdc"/><path d="M1570.5 82.5 H1578 L1581.5 86.0 V96.5 H1570.5 Z" fill="none" stroke="#ececec" stroke-width="2"/><circle cx="1581" cy="83.0" r="2" fill="#23a523"/><path d="M1569 118 H1574 L1576 120 H1581 V122.5 H1571 L1569 130 Z" fill="#ececec"/><path d="M1571 123.5 H1583.5 L1581.5 131 H1569 Z" fill="#ececec"/><path d="M1569 163 V169 H1583 V163 H1580.5 V166.5 H1571.5 V163 Z" fill="#ececec"/><rect x="1571.5" y="163.5" width="9" height="3" fill="#ececec"/><path d="M1576 154 V160" stroke="#23a523" stroke-width="2"/><path d="M1572.5 159 L1576 162.5 L1579.5 159 Z" fill="#23a523"/><rect x="1572" y="191.5" width="8" height="3.5" fill="#ececec"/><path d="M1569 196 H1583 V203 H1580.5 V200 H1571.5 V203 H1569 Z" fill="#ececec"/><rect x="1572" y="201.5" width="8" height="4" fill="#ececec"/><path d="M1570.5 231.5 H1578 L1581.5 235 V246.5 H1570.5 V243" fill="none" stroke="#ececec" stroke-width="2"/><path d="M1567 239 H1575" stroke="#23a523" stroke-width="2"/><path d="M1574 235.5 L1577.5 239 L1574 242.5 Z" fill="#23a523"/><path d="M1581.5 275 V284.5 H1570.5 V269.5 H1578 L1579 270.5" fill="none" stroke="#ececec" stroke-width="2"/><path d="M1576 277.5 H1582" stroke="#23a523" stroke-width="2"/><path d="M1581.5 274 L1585 277.5 L1581.5 281 Z" fill="#23a523"/><path d="M1572 316 H1578 A4.5 4.5 0 0 1 1578 325 H1575" fill="none" stroke="#ececec" stroke-width="2"/><path d="M1575 312 L1570 316 L1575 320 Z" fill="#ececec"/><path d="M1580 353 H1574 A4.5 4.5 0 0 0 1574 362 H1577" fill="none" stroke="#8a8a8a" stroke-width="2"/><path d="M1577 349 L1582 353 L1577 357 Z" fill="#8a8a8a"/><rect x="1569" y="388" width="9" height="9" fill="#ececec"/><rect x="1573" y="392" width="10" height="10" fill="#ececec" stroke="#3b3b3b" stroke-width="1.2"/><circle cx="1572" cy="438" r="2.6" fill="none" stroke="#ececec" stroke-width="1.8"/><circle cx="1580" cy="438" r="2.6" fill="none" stroke="#ececec" stroke-width="1.8"/><path d="M1573.5 436 L1581 427 M1578.5 436 L1571 427" stroke="#ececec" stroke-width="1.8"/><rect x="1570" y="465" width="12" height="14" rx="1.5" fill="none" stroke="#ececec" stroke-width="1.8"/><rect x="1572.5" y="467" width="7" height="10" fill="#ececec"/><rect x="1573" y="463.5" width="6" height="3" fill="#ececec"/><circle cx="1575" cy="511.4" r="6" fill="none" stroke="#ececec" stroke-width="2"/><path d="M1579 515.4 L1582.5 518.9" stroke="#ececec" stroke-width="2.4" stroke-linecap="round"/><rect x="1572" y="508.5" width="6" height="6" fill="none" stroke="#ececec" stroke-width="1" stroke-dasharray="1 1"/><circle cx="1575" cy="547" r="6" fill="none" stroke="#ececec" stroke-width="2"/><path d="M1579 551 L1582.5 554.5" stroke="#ececec" stroke-width="2.4" stroke-linecap="round"/><rect x="1573" y="545" width="5" height="5" fill="#ececec"/><circle cx="1575" cy="584.6" r="6" fill="none" stroke="#ececec" stroke-width="2"/><path d="M1579 588.6 L1582.5 592.1" stroke="#ececec" stroke-width="2.4" stroke-linecap="round"/><rect x="1572.5" y="580.5" width="5" height="8" fill="none" stroke="#ececec" stroke-width="1.2"/><path d="M1569 619 V615.5 H1572.5 M1579.5 615.5 H1583 V619 M1583 626 V629.5 H1579.5 M1572.5 629.5 H1569 V626" fill="none" stroke="#cfcfcf" stroke-width="1"/><rect x="1571" y="617.5" width="10" height="10" fill="none" stroke="#ececec" stroke-width="1.6"/><path d="M1576 619.5 V625.5 M1573 622.5 H1579" stroke="#ececec" stroke-width="1.4"/><path d="M1570 660 H1582 L1576 666 Z" fill="#ececec"/><path d="M8 76 L19.5 81 L14.5 83 L18 88 L15.5 89.5 L12.5 84.5 L8.5 88 Z" fill="none" stroke="#f0f4ff" stroke-width="1.6" stroke-linejoin="round"/><rect x="7.5" y="110" width="5" height="5" fill="none" stroke="#eeeeee" stroke-width="1.6"/><path d="M7 125 Q8 112 19 109" fill="none" stroke="#bbb" stroke-width="0.8"/><path d="M15 117.5 L20 120 L15 122.5 Z" fill="#eeeeee"/><circle cx="10.5" cy="144.5" r="4.3" fill="none" stroke="#eeeeee" stroke-width="1.6"/><rect x="10.5" y="146" width="7" height="6.5" fill="#383838" stroke="#eeeeee" stroke-width="1.6"/><rect x="6.5" y="175.5" width="13" height="13" rx="1" fill="#e0208f" stroke="#eeeeee" stroke-width="1.4"/><circle cx="13" cy="214" r="6.5" fill="#c81e7a" stroke="#eeeeee" stroke-width="1.4"/><path d="M6 244 L10 240 L14 243 L13 249 L8 249 Z" fill="#e0208f" stroke="#eeeeee" stroke-width="1.2"/><path d="M16 243 L17.3 246 L20.5 246.3 L18 248.3 L18.8 251.5 L16 249.8 L13.2 251.5 L14 248.3 L11.5 246.3 L14.7 246 Z" fill="#383838" stroke="#eeeeee" stroke-width="1.2"/><path d="M13 272 L19.5 275.5 V282.5 L13 286 L6.5 282.5 V275.5 Z" fill="#eeeeee"/><path d="M8 277 L12.3 279.3 V284 L8 281.7 Z M18 277 L13.7 279.3 V284 L18 281.7 Z" fill="#e0208f"/><path d="M12.43 310.19 L12.34 310.10 L12.26 309.99 L12.20 309.85 L12.17 309.69 L12.17 309.52 L12.21 309.35 L12.28 309.17 L12.39 309.00 L12.54 308.85 L12.72 308.72 L12.93 308.62 L13.17 308.56 L13.43 308.54 L13.70 308.57 L13.97 308.65 L14.23 308.78 L14.47 308.96 L14.69 309.19 L14.87 309.46 L15.00 309.77 L15.09 310.11 L15.11 310.47 L15.07 310.84 L14.96 311.21 L14.78 311.56 L14.54 311.89 L14.24 312.19 L13.89 312.43 L13.48 312.61 L13.04 312.73 L12.58 312.77 L12.10 312.72 L11.63 312.60 L11.17 312.39 L10.75 312.10 L10.37 311.74 L10.05 311.31 L9.81 310.82 L9.65 310.28 L9.58 309.71 L9.60 309.13 L9.73 308.55 L9.96 307.99 L10.28 307.46 L10.70 306.99 L11.20 306.58 L11.77 306.27 L12.40 306.04 L13.06 305.93 L13.75 305.92 L14.45 306.04 L15.12 306.27 L15.75 306.62 L16.33 307.08 L16.83 307.64 L17.23 308.28 L17.53 308.99 L17.71 309.76 L17.75 310.55 L17.66 311.35 L17.44 312.14 L17.08 312.89 L16.59 313.57 L15.99 314.18 L15.28 314.68 L14.49 315.06 L13.64 315.31 L12.74 315.41 L11.83 315.37 L10.93 315.16 L10.06 314.81 L9.26 314.30 L8.54 313.67 L7.93 312.91 L7.45 312.05 L7.12 311.11 L6.94 310.12 L6.94 309.10 L7.10 308.08" fill="none" stroke="#eeeeee" stroke-width="1.9" stroke-linecap="round"/><circle cx="7.5" cy="341" r="2" fill="#22b022"/><circle cx="7.5" cy="350" r="2" fill="#22b022"/><path d="M7.5 343 V348" stroke="#22b022" stroke-width="1.2"/><path d="M8 342 Q12 337 18 338" fill="none" stroke="#bbb" stroke-width="0.8"/><path d="M11 352 L13.5 345 L18 341 L20.5 344 L17 348.5 Z" fill="#eeeeee"/><circle cx="15" cy="346.5" r="1" fill="#383838"/><path d="M9 369 Q5 371 8 374 Q11 377 7 380 Q5 382 8 384" fill="none" stroke="#22b022" stroke-width="1.4"/><path d="M10 384 L11.5 379 L18 372 L21 375 L14.5 382 Z" fill="#eeeeee"/><path d="M9 402 Q5 404 8 407 Q11 410 7 413 Q5 415 8 416" fill="none" stroke="#22b022" stroke-width="1.4"/><path d="M10 416 L12 412.5 L20 403 L21 404 L14 413 Z" fill="#eeeeee"/><text x="5.5" y="448" font-family="Liberation Sans" font-weight="bold" font-size="14" fill="#eeeeee">A</text><rect x="19" y="434.5" width="1.8" height="14" fill="#22b022"/><defs><linearGradient id="tg" x1="0" y1="0" x2="1" y2="1"><stop offset="0" stop-color="#1f6fd0"/><stop offset="1" stop-color="#9fd6ff"/></linearGradient></defs><rect x="6.5" y="470" width="13" height="13" fill="url(#tg)" stroke="#eeeeee" stroke-width="1.4"/><rect x="6.5" y="501.5" width="13" height="13" fill="#123048" stroke="#eeeeee" stroke-width="1.4"/><path d="M13 508 Q10 503 8 505 M13 508 Q18 503 18 507 M13 508 Q16 513 18 512 M13 508 Q8 513 8 510" fill="none" stroke="#59c3f0" stroke-width="1.4"/><path d="M7.5 533 Q5 537 7.5 538.5 Q10 537 7.5 533 Z" fill="#1d8fe0"/><path d="M9 547 L17 539 M15 537 L20 542" stroke="#eeeeee" stroke-width="2.6" stroke-linecap="round"/><path d="M9 547 L16.5 539.5" stroke="#383838" stroke-width="0.8"/><path d="M7.5 573 Q5 577 7.5 578.5 Q10 577 7.5 573 Z" fill="#1d8fe0"/><path d="M10 570 L15 565 L20.5 570.5 L15.5 575.5 Z" fill="#eeeeee"/><path d="M11 569.5 L15 566" stroke="#383838" stroke-width="1"/><path d="M6 611 V606 Q8 602 12 601 Q16 600 18 602 Q14 603 15 606 L20 606 V611 Z" fill="#eeeeee"/><rect x="10.5" y="638" width="8" height="7" fill="#eeeeee"/><rect x="12.5" y="635" width="4" height="2" fill="#eeeeee"/><circle cx="7" cy="632" r="0.7" fill="#cccccc"/><circle cx="9" cy="634" r="0.7" fill="#cccccc"/><circle cx="6" cy="636" r="0.7" fill="#cccccc"/><circle cx="8" cy="637.5" r="0.7" fill="#cccccc"/><circle cx="10.5" cy="631.5" r="0.7" fill="#cccccc"/><path d="M9 672 L15 666 L19 670 L13 676 Z" fill="#eeeeee"/><path d="M9 672 L11 670 L15 674 L13 676 Z" fill="#999"/><path d="M6 677.5 H9 M13 677.5 H20" stroke="#eeeeee" stroke-width="1.4"/><path d="M6 699 Q9 697 11 701 Q13 705 16 705" fill="none" stroke="#eeeeee" stroke-width="2"/><path d="M15.5 701 L20 705.5 L15 709 Z" fill="#eeeeee"/><path d="M13 728 L8 742 M13 728 L18 742 M6.5 737.5 H19.5" fill="none" stroke="#eeeeee" stroke-width="1.5"/><circle cx="13" cy="729.5" r="1.8" fill="none" stroke="#eeeeee" stroke-width="1.2"/><path d="M7.5 763.5 H16 L18.5 766 V778.5 H7.5 Z" fill="none" stroke="#eeeeee" stroke-width="1.6"/><path d="M13 768 H16 M13 771 H16 M13 774 H16" stroke="#eeeeee" stroke-width="1.2"/><defs><clipPath id="zc"><rect x="0" y="790" width="27" height="16.5"/></clipPath></defs><circle cx="13" cy="804" r="5.5" fill="none" stroke="#eeeeee" stroke-width="1.9" clip-path="url(#zc)"/><rect x="0" y="797" width="27" height="10" fill="none"/><rect x="1" y="809" width="33" height="33" fill="#fff"/><path d="M3.5 811.5 L31.5 839.5 M31.5 811.5 L3.5 839.5" stroke="#c02a4c" stroke-width="2.3"/><circle cx="17.5" cy="825.5" r="3.5" fill="#999" opacity="0.45"/><circle cx="159.5" cy="834" r="4.5" fill="none" stroke="#ddd" stroke-width="1.3"/><path d="M1539.5 830 L1544.5 825 L1549.5 830" fill="none" stroke="#bbb" stroke-width="1.6"/><path d="M1562 824 L1567 829 L1572 824" fill="none" stroke="#bbb" stroke-width="1.6"/><path d="M1584 824.5 H1596 M1584 829 H1596 M1584 833.5 H1596" stroke="#eeeeee" stroke-width="1.8"/><rect x="224.5" y="847" width="1" height="31" fill="#2f2f2f"/><rect x="241.5" y="847" width="1" height="31" fill="#2f2f2f"/><rect x="227" y="859.2" width="12" height="1.8" fill="#eeeeee"/><rect x="244" y="859.2" width="12" height="1.8" fill="#777"/><rect x="249.1" y="854" width="1.8" height="12" fill="#777"/><rect x="270" y="851" width="2.2" height="18" fill="#48c8b0"/><path d="M329 860.5 Q336 852 343 860.5 Q336 869 329 860.5 Z" fill="#eeeeee"/><circle cx="336" cy="860.5" r="2.6" fill="#3b3b3b"/><circle cx="336" cy="860.5" r="1.3" fill="#eeeeee"/><path d="M330 855.5 L332 857 M342 855.5 L340 857 M336 853 V855" stroke="#eeeeee" stroke-width="1.2"/><rect x="366" y="859" width="9.5" height="8.5" fill="#eeeeee"/><path d="M373 859 V855.5 A3 3 0 0 1 379 855.5 V857" fill="none" stroke="#eeeeee" stroke-width="1.8"/><rect x="1447.5" y="859.2" width="12.5" height="1.8" fill="#eeeeee"/><rect x="1464.5" y="859.2" width="12.5" height="1.8" fill="#eeeeee"/><rect x="1469.8" y="854" width="1.8" height="12.5" fill="#eeeeee"/><rect x="1558" y="859.2" width="12.5" height="1.8" fill="#eeeeee"/><rect x="1575" y="859.2" width="12.5" height="1.8" fill="#eeeeee"/><rect x="1580.3" y="854" width="1.8" height="12.5" fill="#eeeeee"/></svg>
</body></html>
